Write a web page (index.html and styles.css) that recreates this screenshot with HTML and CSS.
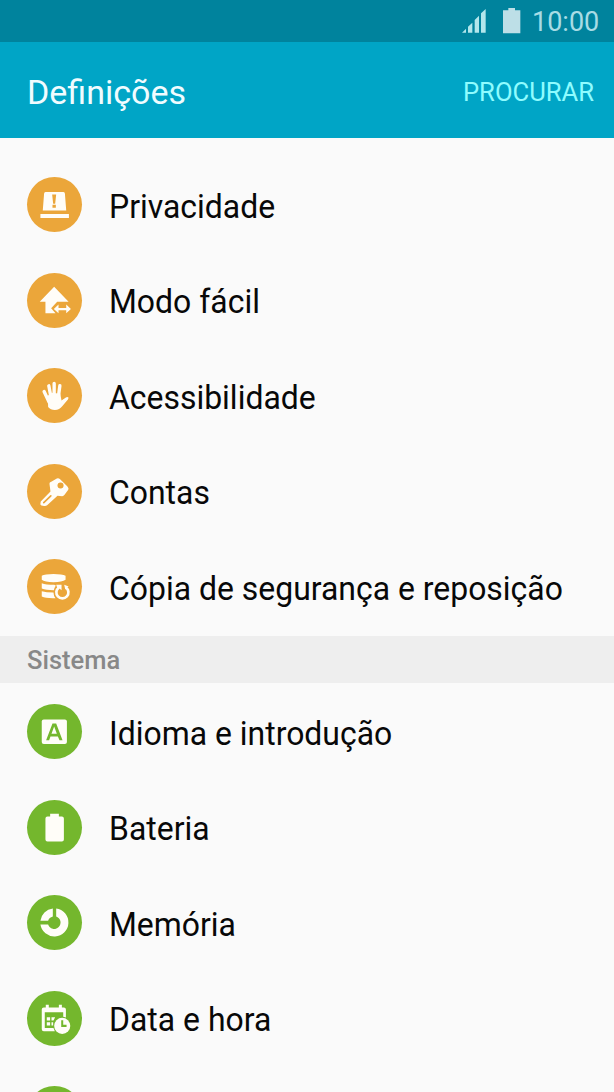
FILE: index.html
```html
<!DOCTYPE html>
<html lang="pt">
<head>
<meta charset="utf-8">
<title>Definições</title>
<link rel="stylesheet" href="styles.css">
</head>
<body>
<div class="screen">
  <div class="status">
    <svg class="signal" viewBox="66 24 74 78"><path d="M66 98L78 86V98ZM84 98V80L97 68V98ZM104 98V60L117 47V98ZM123 98V40L137 27V98Z"/></svg>
    <svg class="battery" viewBox="189 24 54 78"><path d="M189 31H205V24H225V31H241V100H189Z"/></svg>
    <span class="clock">10:00</span>
  </div>
  <header class="bar">
    <h1 class="title">Definições</h1>
    <span class="search">PROCURAR</span>
  </header>
  <ul class="list personal">
    <li class="row">
      <svg class="icon" viewBox="22 22 164 164"><path d="M78 67H130Q134 67 135 71L139 122H69L73 71Q74 67 78 67ZM62 132H147V144H62Z"/><path class="cut" d="M97 74H109L106 102H100ZM98 105H108V114H98Z"/></svg>
      <span class="label">Privacidade</span>
    </li>
    <li class="row">
      <svg class="icon" viewBox="22 24 164 164"><path d="M103 65L146 110H112L94 129L107 144H77V110H60ZM102 131L116 118V128H139V118L153 131L139 144V135H116V144Z"/></svg>
      <span class="label">Modo fácil</span>
    </li>
    <li class="row">
      <svg class="icon" viewBox="22 22 164 164"><path d="M84 105L96 96L121 99L125 119L138 110Q143 107 146 111L144 116L127 136Q119 147 105 147Q92 147 85 138Z"/><path class="finger" d="M73 92L88 124M87 75L94 112M103 68V110M120 75L115 112"/></svg>
      <span class="label">Acessibilidade</span>
    </li>
    <li class="row">
      <svg class="icon" viewBox="22 24 164 164"><path d="M89 83Q89 79 93 78L111 67Q116 65 120 69L142 90Q148 96 145 101L134 116Q131 120 127 120L113 119L82 147Q78 150 73 149L65 148Q61 147 62 142L63 136L92 106Z"/><circle class="cut" cx="122" cy="88" r="9"/><path class="groove" d="M72 139L93 119"/></svg>
      <span class="label">Contas</span>
    </li>
    <li class="row">
      <svg class="icon" viewBox="22 22 164 164"><path d="M66 72Q75 67 101 67T137 72V84Q127 91 101 91T66 84ZM66 94Q78 99 103 99L108 101Q104 107 102 115Q78 115 66 110ZM66 118Q79 122 101 122Q101 132 107 139Q78 140 66 134ZM109 99H125V115L119 110L114 114Z"/><path class="arc" d="M117 107A18 18 0 1 0 138 107"/><path d="M133 99L146 104L136 113Z"/></svg>
      <span class="label">Cópia de segurança e reposição</span>
    </li>
  </ul>
  <h2 class="section">Sistema</h2>
  <ul class="list system">
    <li class="row">
      <svg class="icon" viewBox="22 22 164 164"><rect x="66" y="68" width="75" height="73" rx="6"/><path class="cut" fill-rule="evenodd" d="M98 80H109L128 130H119L114 119H92L88 130H79ZM95 111H111L103 89Z"/></svg>
      <span class="label">Idioma e introdução</span>
    </li>
    <li class="row">
      <svg class="icon" viewBox="22 22 164 164"><path d="M91 63H117V71H126Q132 71 132 77V140Q132 146 126 146H83Q77 146 77 140V77Q77 71 83 71H91Z"/></svg>
      <span class="label">Bateria</span>
    </li>
    <li class="row">
      <svg class="icon" viewBox="22 22 164 164"><path d="M109 62A42 42 0 1 1 62 110H85A19 19 0 1 0 109 86ZM62 99A42 42 0 0 1 99 62V86Q88 89 85 99Z"/></svg>
      <span class="label">Memória</span>
    </li>
    <li class="row">
      <svg class="icon" viewBox="22 22 164 164"><path d="M78 63H87V71H117V63H126V71H132Q138 71 138 77V85H66V77Q66 71 72 71H78ZM66 84H75V132H101L105 142H72Q66 142 66 136ZM130 84H138V101L130 99ZM81 100H91V110H81ZM95 100H106L101 110H95ZM81 115H91V125H81ZM95 115H100V125H95Z"/><circle cx="127" cy="126" r="24"/><path class="hands" d="M127 109V126H140"/></svg>
      <span class="label">Data e hora</span>
    </li>
    <li class="row">
      <svg class="icon" viewBox="22 22 164 164"></svg>
    </li>
  </ul>
</div>
</body>
</html>
```
FILE: styles.css
```css
* { box-sizing: border-box; }
body { margin: 0; font-family: Roboto, sans-serif; background: #fafafa; }
.screen { width: 614px; height: 1092px; overflow: hidden; display: flex; flex-direction: column; }
.screen > * { flex-shrink: 0; }
.status { height: 42px; background: #00839d; display: flex; justify-content: flex-end; padding: 8px 15px 0 0; }
.status svg { height: 26px; }
.signal { width: 24.7px; fill: #b3e6ec; }
.battery { width: 18px; margin-left: 16.3px; fill: #bddfe7; }
.clock { margin-left: 11px; width: 67px; font-size: 27px; line-height: 29px; color: #a8dce5; white-space: nowrap; }
.bar { height: 96px; background: #00a5c6; display: flex; align-items: center; justify-content: space-between; padding: 3px 20px 0 27px; }
.title { margin: 0; padding-top: 1px; font-size: 34px; font-weight: 400; color: #f0fcff; }
.search { font-size: 25.6px; color: #8ffcff; }
.list { list-style: none; margin: 0; padding: 0; }
.personal { padding-top: 19px; height: 497.5px; color: #eba63a; }
.system { padding-top: 1px; color: #74b72d; }
.row { height: 95.5px; display: flex; align-items: center; padding-left: 27px; }
.icon { width: 55px; height: 55px; border-radius: 50%; background: currentColor; fill: #fffdf8; }
.icon .cut { fill: currentColor; }
.finger { fill: none; stroke: #fffdf8; stroke-width: 10; stroke-linecap: round; }
.groove { stroke: currentColor; stroke-width: 5; stroke-linecap: round; }
.arc { fill: none; stroke: #fffdf8; stroke-width: 8; }
.hands { fill: none; stroke: currentColor; stroke-width: 6; }
.label { margin-left: 27.3px; padding-top: 3px; font-size: 33.5px; color: #080808; white-space: nowrap; transform: scaleX(0.953); transform-origin: left center; }
.section { margin: 0; height: 47.5px; padding: 1px 27px 0; background: #eee; color: #888; font-size: 25.5px; line-height: 47px; font-weight: 500; }
```
